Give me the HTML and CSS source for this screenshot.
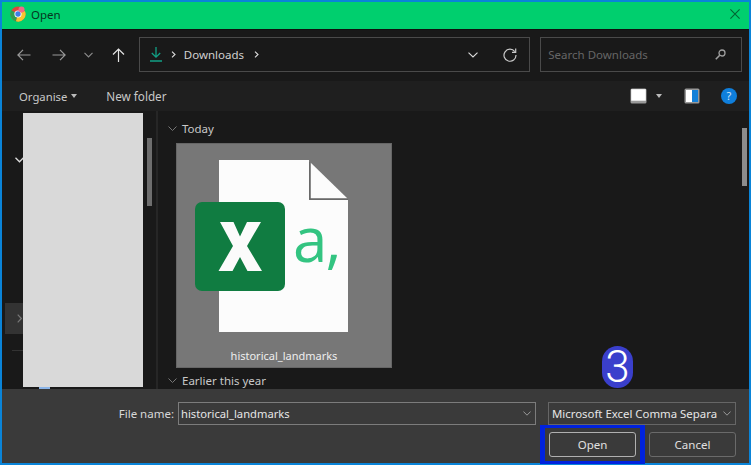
FILE: index.html
```html
<!DOCTYPE html>
<html lang="en">
<head>
<meta charset="utf-8">
<title>Open</title>
<link rel="stylesheet" href="styles.css">
</head>
<body>
<div class="window">
  <header class="titlebar">
    <svg class="app-icon" width="16" height="16" viewBox="0 0 16 16">
      <circle cx="8" cy="8" r="7.5" fill="#e0443a"/>
      <path d="M8 8 L1.5 4.2 A7.5 7.5 0 0 0 6 15.3Z" fill="#2f9e50"/>
      <path d="M8 8 L14.9 5 A7.5 7.5 0 0 1 6 15.3Z" fill="#f6c431"/>
      <circle cx="8" cy="8" r="3.6" fill="#fff"/>
      <circle cx="8" cy="8" r="2.7" fill="#3f7fe6"/>
      <circle cx="11.5" cy="3.5" r="3" fill="#f06a8a"/>
    </svg>
    <span class="title-text">Open</span>
    <svg class="close" width="10" height="10" viewBox="0 0 10 10"><path d="M.4.4l9.200 9.200M9.600.4L.4 9.600" stroke="#063" stroke-width="1.100" fill="none"/></svg>
  </header>

  <nav class="navbar">
    <div class="nav-buttons">
      <svg class="nav-arrow" width="14" height="12" viewBox="0 0 14 12"><path d="M13.500 6H1M6 .8L.9 6 6 11.200" stroke="#9a9a9a" stroke-width="1.200" fill="none"/></svg>
      <svg class="nav-arrow" width="14" height="12" viewBox="0 0 14 12"><path d="M.5 6H13M8 .8L13.100 6 8 11.200" stroke="#9a9a9a" stroke-width="1.200" fill="none"/></svg>
      <svg class="nav-chev" width="9" height="6" viewBox="0 0 9 6"><path d="M.5.8l4 4 4-4" stroke="#8a8a8a" stroke-width="1.200" fill="none"/></svg>
      <svg class="nav-arrow" width="13" height="14" viewBox="0 0 13 14"><path d="M6.500 14V1M1 6.500L6.500 1 12 6.500" stroke="#e4e4e4" stroke-width="1.200" fill="none"/></svg>
    </div>
    <div class="address">
      <svg width="12" height="15" viewBox="0 0 12 15"><path d="M6 0v10M1.800 6L6 10.200 10.200 6M0 14h12" stroke="#12a085" stroke-width="1.300" fill="none"/></svg>
      <svg class="crumb" width="5" height="7" viewBox="0 0 5 7"><path d="M1 .7l3 2.800-3 2.800" stroke="#ddd" stroke-width="1.100" fill="none"/></svg>
      <span class="crumb-text">Downloads</span>
      <svg class="crumb" width="5" height="7" viewBox="0 0 5 7"><path d="M1 .7l3 2.800-3 2.800" stroke="#ddd" stroke-width="1.100" fill="none"/></svg>
      <span class="spacer"></span>
      <svg width="10" height="6" viewBox="0 0 10 6"><path d="M.5.7L5 5l4.500-4.300" stroke="#ddd" stroke-width="1.100" fill="none"/></svg>
      <svg class="refresh" width="14" height="14" viewBox="0 0 14 14"><path d="M11.800 3.600A6 6 0 1 0 13 7" stroke="#c8c8c8" stroke-width="1.200" fill="none"/><path d="M12.700 .6v3.700H9" stroke="#c8c8c8" stroke-width="1.200" fill="none"/></svg>
    </div>
    <div class="search">
      <span class="search-text">Search Downloads</span>
      <svg width="11" height="11" viewBox="0 0 11 11"><circle cx="7" cy="4" r="3" stroke="#a0a0a0" stroke-width="1.300" fill="none"/><path d="M4.700 6.300L.8 10.200" stroke="#a0a0a0" stroke-width="1.600"/></svg>
    </div>
  </nav>

  <div class="toolbar">
    <span class="tool">Organise</span>
    <i class="caret"></i>
    <span class="tool new-folder">New folder</span>
    <span class="spacer"></span>
    <svg class="view-icon" width="17" height="16" viewBox="0 0 17 16"><rect x=".5" y=".5" width="16" height="15" rx="1.500" fill="#999"/><rect x="1.200" y="1.200" width="14.600" height="11.500" fill="#fff"/></svg>
    <i class="caret view-caret"></i>
    <svg class="pane-icon" width="16" height="16" viewBox="0 0 16 16"><rect x=".5" y=".5" width="15" height="15" rx="1.500" fill="#999"/><rect x="2" y="2" width="6" height="12" fill="#fff"/><rect x="8" y="2" width="6" height="12" fill="#1380d8"/></svg>
    <svg class="help-icon" width="16" height="16" viewBox="0 0 16 16"><circle cx="8" cy="8" r="8" fill="#0f7fdc"/><text x="8" y="12" text-anchor="middle" class="help-mark">?</text></svg>
  </div>

  <div class="content">
    <aside class="sidebar">
      <div class="tree-gutter">
        <svg class="tree-chev" width="9" height="6" viewBox="0 0 9 6"><path d="M.5.8l4 4 4-4" stroke="#ddd" stroke-width="1.300" fill="none"/></svg>
        <div class="expander"><svg width="5" height="9" viewBox="0 0 5 9"><path d="M.7.7l3.600 3.800L.7 8.300" stroke="#777" stroke-width="1.200" fill="none"/></svg></div>
        <div class="tree-line"></div>
      </div>
      <div class="redaction"></div>
      <div class="side-scroll"><div class="side-thumb"></div></div>
      <i class="tree-mark"></i>
    </aside>
    <main class="files">
      <div class="group-head">
        <svg width="9" height="5" viewBox="0 0 9 5"><path d="M.5.5l4 4 4-4" stroke="#777" stroke-width="1" fill="none"/></svg>
        <span>Today</span>
      </div>
      <figure class="tile">
        <div class="thumb">
          <svg width="154" height="173" viewBox="0 0 154 173">
            <path d="M24 0H114V40H153V172H24Z" fill="#fcfcfc"/>
            <path d="M115 2L153 39H115Z" fill="#fcfcfc"/>
            <path d="M115 2V39H153" stroke="#666" stroke-width="1.500" fill="none"/>
            <rect y="42" width="90" height="89" rx="7" fill="#107c41"/>
            <path d="M25 62H38.500L45 76.500 52 62H66L52 86 67 111H52.500L45 97 37.500 111H23.500L38 86Z" fill="#fbfbfb"/>
          </svg>
          <span class="thumb-a">a,</span>
        </div>
        <figcaption>historical_landmarks</figcaption>
      </figure>
      <div class="group-head earlier">
        <svg width="9" height="5" viewBox="0 0 9 5"><path d="M.5.5l4 4 4-4" stroke="#777" stroke-width="1" fill="none"/></svg>
        <span>Earlier this year</span>
      </div>
      <div class="main-thumb"></div>
      <div class="badge">3</div>
    </main>
  </div>

  <footer class="footer">
    <div class="row-name">
      <label class="name-label">File name:</label>
      <div class="field name-field"><span class="name-value">historical_landmarks</span>
        <svg width="8" height="5" viewBox="0 0 8 5"><path d="M.4.5L4 4.200 7.600.5" stroke="#999" stroke-width="1" fill="none"/></svg></div>
      <div class="field type-field"><span>Microsoft Excel Comma Separa</span>
        <svg width="8" height="5" viewBox="0 0 8 5"><path d="M.4.5L4 4.200 7.600.5" stroke="#999" stroke-width="1" fill="none"/></svg></div>
    </div>
    <div class="row-actions">
      <div class="highlight"><button class="btn primary">Open</button></div>
      <button class="btn cancel">Cancel</button>
    </div>
  </footer>
</div>
</body>
</html>
```
FILE: styles.css
```css
* { box-sizing: border-box; }
html, body { margin: 0; height: 100%; }
body { background: #0a84d8; font-family: "Noto Sans", "Open Sans", sans-serif; font-size: 11.500px; color: #dcdcdc; overflow: hidden; }
.window { width: 751px; height: 465px; padding: 2px; display: flex; flex-direction: column; }
.titlebar { height: 27px; flex: none; background: #00cf6e; display: flex; align-items: center; padding: 0 9px 3px 8px; color: #06351f; }
.title-text { margin-left: 5px; }
.close { margin-left: auto; }
.navbar { height: 52px; flex: none; background: #191919; display: flex; align-items: flex-start; padding: 7px 7px 0 0; border-top: 1px solid #101010; }
.nav-buttons { width: 137px; height: 35px; display: flex; align-items: center; padding-left: 15px; }
.nav-arrow { flex: none; }
.nav-buttons .nav-arrow:nth-child(2) { margin-left: 21px; }
.nav-chev { margin-left: 18px; }
.nav-buttons .nav-arrow:nth-child(4) { margin-left: 19px; }
.address { width: 392px; height: 35px; border: 1px solid #4a4a4a; display: flex; align-items: center; padding: 0 12px 0 10px; }
.crumb { margin-left: 9px; }
.crumb-text { margin-left: 8px; color: #d0d0d0; }
.crumb-text + .crumb { margin-left: 10px; }
.spacer { flex: 1; }
.refresh { margin-left: 25px; }
.search { width: 202px; height: 35px; margin-left: 10px; border: 1px solid #4a4a4a; display: flex; align-items: center; justify-content: space-between; padding: 0 15px 0 7px; }
.search-text { color: #666; }
.toolbar { height: 30px; flex: none; background: #1f1f1f; display: flex; align-items: center; padding: 0 12px 0 17px; color: #c8c8c8; }
.tool { font-size: 11.300px; }
.caret { width: 0; height: 0; border-left: 3.500px solid transparent; border-right: 3.500px solid transparent; border-top: 4px solid #bbb; margin-left: 4px; }
.new-folder { margin-left: 29px; font-size: 11.700px; }
.view-caret { margin-left: 9px; }
.pane-icon { margin-left: 22px; }
.help-icon { margin-left: 21px; }
.help-mark { font: 11px "Noto Sans", sans-serif; fill: #cfe6fa; }
.content { flex: 1; display: flex; background: #191919; min-height: 0; }
.sidebar { width: 156px; flex: none; display: flex; position: relative; border-right: 2px solid #262626; }
.tree-gutter { width: 21px; flex: none; position: relative; }
.tree-chev { position: absolute; left: 13px; top: 46px; }
.expander { position: absolute; left: 3px; top: 192px; width: 18px; height: 31px; background: #333; display: flex; align-items: center; padding-left: 12px; }
.tree-line { position: absolute; left: 10px; top: 239px; width: 11px; height: 1px; background: #333; }
.redaction { width: 120px; margin: 2px 0; background: #d9d9d9; flex: none; }
.side-scroll { margin-left: 4px; padding-top: 27px; }
.side-thumb { width: 5px; height: 68px; background: #6e6e6e; }
.tree-mark { position: absolute; left: 37px; bottom: 0; width: 11px; height: 2px; background: #8ab4e8; }
.files { flex: 1; position: relative; padding: 9px 0 0 10px; }
.group-head { display: flex; align-items: center; height: 16px; gap: 5px; color: #c8c8c8; }
.tile { margin: 7px 0 0 8px; width: 216px; height: 225px; background: #777; border: 1px solid #666; position: relative; display: flex; flex-direction: column; align-items: center; }
.thumb { width: 154px; height: 173px; margin: 16px 0 0 18px; align-self: flex-start; position: relative; }
.thumb svg { display: block; }
.thumb-a { position: absolute; left: 98px; top: 38px; font-family: "Open Sans", "Noto Sans", sans-serif; font-size: 62px; font-weight: 500; letter-spacing: -2px; line-height: 80px; color: #33c481; white-space: nowrap; }
figcaption { margin-top: 15px; color: #eee; font-size: 11px; }
.earlier { margin-top: 4px; }
.main-thumb { position: absolute; right: 2px; top: 17px; width: 5px; height: 58px; background: #8c8c8c; }
.badge { position: absolute; left: 444px; top: 235px; width: 31px; height: 42px; border-radius: 16px; background: #3a3fcc; color: #fff; font-family: Roboto, sans-serif; font-size: 44px; font-weight: 300; line-height: 42px; text-align: center; }
.footer { height: 74px; flex: none; background: #3a3a3a; position: relative; }
.row-name { display: flex; align-items: flex-start; padding-top: 13px; }
.name-label { width: 172px; text-align: right; line-height: 23px; color: #d8d8d8; }
.field { height: 23px; border: 1px solid #7c7c7c; display: flex; align-items: center; justify-content: space-between; padding: 0 4px 0 2px; color: #e6e6e6; white-space: nowrap; }
.field svg { flex: none; }
.name-field { width: 358px; margin-left: 4px; }
.name-value { font-size: 11.200px; }
.type-field { width: 188px; margin-left: 12px; border-color: #666; padding-left: 3px; font-size: 11.400px; }
.row-actions { display: flex; padding-left: 538px; }
.highlight { width: 105px; height: 39px; flex: none; border: solid #0022dd; border-width: 3px 5px; padding: 4px 0 0 4px; }
.btn { display: block; width: 87px; height: 25px; background: #3a3a3a; border: 1px solid #6a6a6a; border-radius: 3px; color: #e0e0e0; font: 11.500px "Noto Sans", sans-serif; padding: 0; }
.primary { border: 1px solid #b0b0b0; }
.cancel { margin: 7px 0 0 4px; }
```
